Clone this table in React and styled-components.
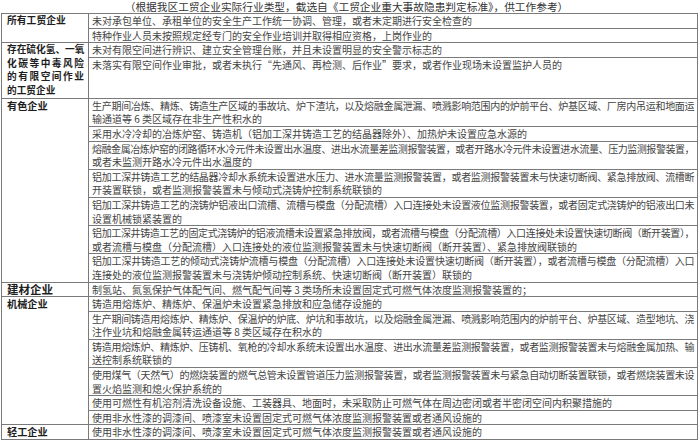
import React from 'react';
import styled, { createGlobalStyle } from 'styled-components';

const Global = createGlobalStyle`
  html, body { margin: 0; padding: 0; background: #fff; }
  body { font-family: "Noto Sans CJK SC", "Noto Sans", sans-serif; }
`;

const Page = styled.div`
  width: 700px;
  height: 440px;
  overflow: hidden;
  padding-left: 1px;
  box-sizing: border-box;
`;

const Title = styled.div`
  height: 13px;
  line-height: 13px;
  font-size: 10.7px;
  color: #333;
  text-align: center;
  padding-right: 8px;
  white-space: nowrap;
`;

const Table = styled.table`
  width: 697px;
  border-collapse: collapse;
  table-layout: fixed;
`;

const Category = styled.td`
  border: 1px solid #7a7a7a;
  padding: 0 4px 0 5px;
  vertical-align: top;
  font-size: ${p => p.$size || 10.2}px;
  line-height: 13.6px;
  font-weight: 700;
  color: #1e1e1e;
  overflow: hidden;
`;

const Item = styled.td`
  border: 1px solid #7a7a7a;
  padding: 0 3px;
  vertical-align: top;
  font-size: 10px;
  line-height: 13.6px;
  color: #444;
  overflow: hidden;
  height: ${p => (p.$h ? `${p.$h}px` : 'auto')};
`;

const Line = styled.span`
  display: block;
  white-space: nowrap;
  text-align: ${p => (p.$justify ? 'justify' : 'left')};
  text-align-last: ${p => (p.$justify ? 'justify' : 'auto')};
  letter-spacing: ${p => (p.$justify && p.$tight ? '-0.6px' : '0')};
`;

const groups = [
  {
    name: ['所有工贸企业'],
    size: 9.8,
    items: [
      ['未对承包单位、承租单位的安全生产工作统一协调、管理，或者未定期进行安全检查的'],
      ['特种作业人员未按照规定经专门的安全作业培训并取得相应资格，上岗作业的'],
    ],
  },
  {
    name: ['存在硫化氢、一氧', '化碳等中毒风险', '的有限空间作业', '的工贸企业'],
    size: 9.7,
    heights: [13.6, 40],
    items: [
      ['未对有限空间进行辨识、建立安全管理台账，并且未设置明显的安全警示标志的'],
      ['未落实有限空间作业审批，或者未执行“先通风、再检测、后作业”要求，或者作业现场未设置监护人员的'],
    ],
  },
  {
    name: ['有色企业'],
    items: [
      [
        '生产期间冶炼、精炼、铸造生产区域的事故坑、炉下渣坑，以及熔融金属泄漏、喷溅影响范围内的炉前平台、炉基区域、厂房内吊运和地面运',
        '输通道等 6 类区域存在非生产性积水的',
      ],
      ['采用水冷冷却的冶炼炉窑、铸造机（铝加工深井铸造工艺的结晶器除外）、加热炉未设置应急水源的'],
      [
        '熔融金属冶炼炉窑的闭路循环水冷元件未设置出水温度、进出水流量差监测报警装置，或者开路水冷元件未设置进水流量、压力监测报警装置，',
        '或者未监测开路水冷元件出水温度的',
      ],
      [
        '铝加工深井铸造工艺的结晶器冷却水系统未设置进水压力、进水流量监测报警装置，或者监测报警装置未与快速切断阀、紧急排放阀、流槽断',
        '开装置联锁，或者监测报警装置未与倾动式浇铸炉控制系统联锁的',
      ],
      [
        '铝加工深井铸造工艺的浇铸炉铝液出口流槽、流槽与模盘（分配流槽）入口连接处未设置液位监测报警装置，或者固定式浇铸炉的铝液出口未',
        '设置机械锁紧装置的',
      ],
      [
        '铝加工深井铸造工艺的固定式浇铸炉的铝液流槽未设置紧急排放阀，或者流槽与模盘（分配流槽）入口连接处未设置快速切断阀（断开装置），',
        '或者流槽与模盘（分配流槽）入口连接处的液位监测报警装置未与快速切断阀（断开装置）、紧急排放阀联锁的',
      ],
      [
        '铝加工深井铸造工艺的倾动式浇铸炉流槽与模盘（分配流槽）入口连接处未设置快速切断阀（断开装置），或者流槽与模盘（分配流槽）入口',
        '连接处的液位监测报警装置未与浇铸炉倾动控制系统、快速切断阀（断开装置）联锁的',
      ],
    ],
  },
  {
    name: ['建材企业'],
    size: 11.5,
    items: [['制氢站、氮氢保护气体配气间、燃气配气间等 3 类场所未设置固定式可燃气体浓度监测报警装置的；']],
  },
  {
    name: ['机械企业'],
    items: [
      ['铸造用熔炼炉、精炼炉、保温炉未设置紧急排放和应急储存设施的'],
      [
        '生产期间铸造用熔炼炉、精炼炉、保温炉的炉底、炉坑和事故坑，以及熔融金属泄漏、喷溅影响范围内的炉前平台、炉基区域、造型地坑、浇',
        '注作业坑和熔融金属转运通道等 8 类区域存在积水的',
      ],
      [
        '铸造用熔炼炉、精炼炉、压铸机、氧枪的冷却水系统未设置出水温度、进出水流量差监测报警装置，或者监测报警装置未与熔融金属加热、输',
        '送控制系统联锁的',
      ],
      [
        '使用煤气（天然气）的燃烧装置的燃气总管未设置管道压力监测报警装置，或者监测报警装置未与紧急自动切断装置联锁，或者燃烧装置未设',
        '置火焰监测和熄火保护系统的',
      ],
      ['使用可燃性有机溶剂清洗设备设施、工装器具、地面时，未采取防止可燃气体在周边密闭或者半密闭空间内积聚措施的'],
      ['使用非水性漆的调漆间、喷漆室未设置固定式可燃气体浓度监测报警装置或者通风设施的'],
    ],
  },
  {
    name: ['轻工企业'],
    items: [['使用非水性漆的调漆间、喷漆室未设置固定式可燃气体浓度监测报警装置或者通风设施的']],
  },
];

export default function App() {
  return (
    <Page>
      <Global />
      <Title>（根据我区工贸企业实际行业类型，截选自《工贸企业重大事故隐患判定标准》，供工作参考）</Title>
      <Table>
        <colgroup>
          <col style={{ width: '87px' }} />
          <col />
        </colgroup>
        <tbody>
          {groups.map((g, gi) =>
            g.items.map((lines, i) => (
              <tr key={`${gi}-${i}`}>
                {i === 0 && (
                  <Category rowSpan={g.items.length} $size={g.size}>
                    {g.name.map((n, ni) => (
                      <Line key={ni} $justify={ni < g.name.length - 1}>
                        {n}
                      </Line>
                    ))}
                  </Category>
                )}
                <Item $h={g.heights ? g.heights[i] : undefined}>
                  {lines.map((l, li) => (
                    <Line key={li} $justify={li < lines.length - 1} $tight>
                      {l}
                    </Line>
                  ))}
                </Item>
              </tr>
            ))
          )}
        </tbody>
      </Table>
    </Page>
  );
}
